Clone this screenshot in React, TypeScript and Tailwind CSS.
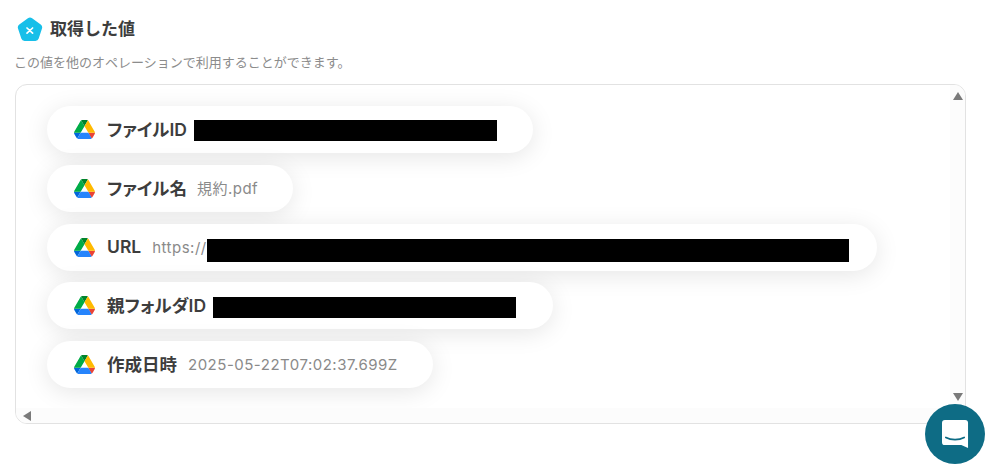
const FONT = "font-['Inter','Noto_Sans_CJK_JP',sans-serif]";

function DriveIcon() {
  return (
    <svg viewBox="0 0 87.3 78" className="h-[19px] w-[21px] shrink-0">
      <path d="m6.6 66.85 3.85 6.65c.8 1.4 1.95 2.5 3.3 3.3l13.75-23.8h-27.5c0 1.55.4 3.1 1.2 4.5z" fill="#0066da" />
      <path d="m43.65 25-13.75-23.8c-1.35.8-2.5 1.9-3.3 3.3l-25.4 44a9.06 9.06 0 0 0 -1.2 4.5h27.5z" fill="#00ac47" />
      <path d="m73.55 76.8c1.35-.8 2.5-1.9 3.3-3.3l1.6-2.75 7.65-13.25c.8-1.4 1.2-2.95 1.2-4.5h-27.502l5.852 11.5z" fill="#ea4335" />
      <path d="m43.65 25 13.75-23.8c-1.35-.8-2.9-1.2-4.5-1.2h-18.5c-1.6 0-3.15.45-4.5 1.2z" fill="#00832d" />
      <path d="m59.8 53h-32.3l-13.75 23.8c1.35.8 2.9 1.2 4.5 1.2h50.8c1.6 0 3.15-.45 4.5-1.2z" fill="#2684fc" />
      <path d="m73.4 26.5-12.7-22c-.8-1.4-1.95-2.5-3.3-3.3l-13.75 23.8 16.15 28h27.45c0-1.55-.4-3.1-1.2-4.5z" fill="#ffba00" />
    </svg>
  );
}

function Pill({ width, label, children }: { width: string; label: string; children: React.ReactNode }) {
  return (
    <div className={`flex h-[47px] shrink-0 items-center rounded-full bg-white pl-[27px] shadow-[0_4px_24px_rgba(0,0,0,0.1)] ${width}`}>
      <DriveIcon />
      <span className="ml-[12px] text-[17.5px] leading-none font-semibold whitespace-nowrap text-[#3d3d3d] [font-feature-settings:'palt']">{label}</span>
      {children}
    </div>
  );
}

function Value({ text, className }: { text: string; className: string }) {
  return <span className={`text-[15px] leading-none tracking-[0.5px] whitespace-nowrap text-[#8a8a8a] ${className}`}>{text}</span>;
}

export default function App() {
  return (
    <main className={`relative h-[473px] w-[997px] overflow-hidden bg-white ${FONT}`}>
      <div className="pt-[16px] pl-[15px]">
        <div className="flex h-[26px] items-center pl-[2px]">
          <svg viewBox="0 0 26 25" className="h-[25px] w-[26px] shrink-0">
            <path d="M10.9 1.2a3.5 3.5 0 0 1 4.2 0l8.6 6.3a3.5 3.5 0 0 1 1.3 3.9l-3.3 10.2a3.5 3.5 0 0 1-3.4 2.4H7.7a3.5 3.5 0 0 1-3.4-2.4L1 11.4a3.5 3.5 0 0 1 1.3-3.9z" fill="#17bfe9" />
            <path d="M10 11l5.6 5.200M15.6 11l-5.600 5.200" stroke="#ffffff" strokeWidth="1.7" strokeLinecap="round" />
          </svg>
          <h1 className="ml-[7px] text-[17px] leading-none font-semibold text-[#3d3d3d]">取得した値</h1>
        </div>
        <p className="mt-[12px] -ml-px text-[13px] leading-[17px] text-[#8c8c8c]">この値を他のオペレーションで利用することができます。</p>

        <div className="mt-[13px] flex h-[340px] w-[951px] flex-col overflow-hidden rounded-[12px] border border-[#e2e2e2] bg-white">
          <div className="flex min-h-0 flex-1">
            <div className="flex flex-1 flex-col gap-[11.75px] pt-[21px] pl-[31px]">
              <Pill width="w-[486px]" label="ファイルID">
                <div className="mt-[2px] ml-[7px] h-[21px] w-[303px] bg-black" />
              </Pill>
              <Pill width="w-[246px]" label="ファイル名">
                <Value text="規約.pdf" className="ml-[10px]" />
              </Pill>
              <Pill width="w-[830px]" label="URL">
                <Value text="https://" className="ml-[11px]" />
                <div className="mt-[6px] h-[23px] w-[642px] bg-black" />
              </Pill>
              <Pill width="w-[506px]" label="親フォルダID">
                <div className="mt-[4px] ml-[7px] h-[21px] w-[303px] bg-black" />
              </Pill>
              <Pill width="w-[386px]" label="作成日時">
                <Value text="2025-05-22T07:02:37.699Z" className="ml-[11px]" />
              </Pill>
            </div>
            <div className="flex w-[15px] flex-col items-center justify-between bg-[#fcfcfc] pt-[7px] pb-[7px]">
              <div className="h-0 w-0 border-x-[5px] border-b-[8px] border-x-transparent border-b-[#7a7a7a]" />
              <div className="h-0 w-0 border-x-[5px] border-t-[8px] border-x-transparent border-t-[#7a7a7a]" />
            </div>
          </div>
          <div className="flex h-[15px] items-center bg-[#fcfcfc] pl-[7px]">
            <div className="h-0 w-0 border-y-[5px] border-r-[8px] border-y-transparent border-r-[#7a7a7a]" />
          </div>
        </div>
      </div>

      <button className="absolute top-[404px] left-[925px] flex h-[60px] w-[60px] items-center justify-center rounded-full bg-[#0e6c85]">
        <svg viewBox="0 0 28 30" className="h-[29px] w-[27px]">
          <path d="M3 0h21a3 3 0 0 1 3 3v26l-7-3H3a3 3 0 0 1-3-3V3a3 3 0 0 1 3-3z" fill="#ffffff" />
          <path d="M4 18c5.500 3 13.500 3 19 0" fill="none" stroke="#0e6c85" strokeWidth="1.8" strokeLinecap="round" />
        </svg>
      </button>
    </main>
  );
}
